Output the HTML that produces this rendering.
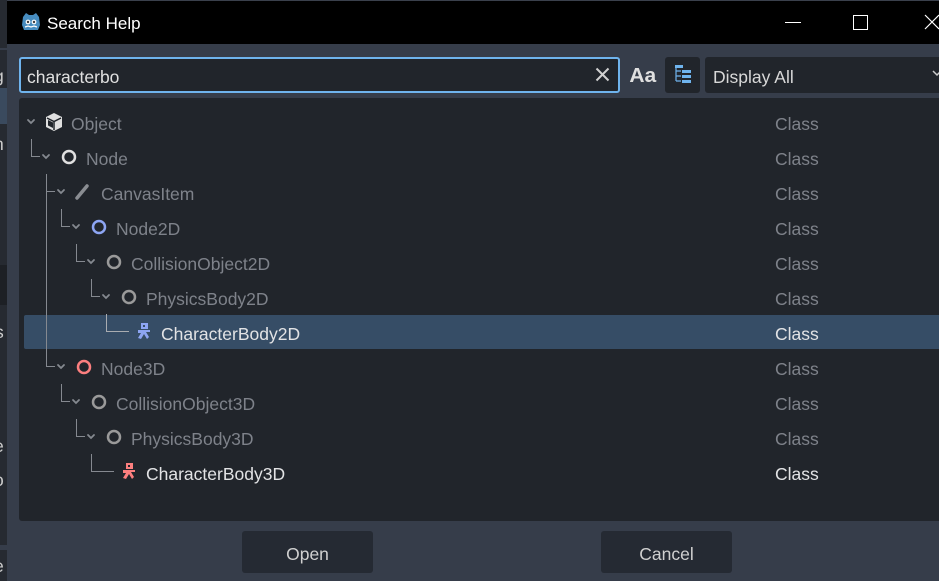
<!DOCTYPE html>
<html><head><meta charset="utf-8"><style>
*{margin:0;padding:0;box-sizing:border-box}
body{width:939px;height:581px;overflow:hidden;background:#363d4a;font-family:"Liberation Sans","DejaVu Sans",sans-serif;position:relative}
.a{position:absolute}
.t{position:absolute;font-size:17.5px;line-height:20px;white-space:nowrap;margin-top:2px}
.dim{color:#7e828a}.br{color:#e2e3e5}
</style></head><body>
<div class="a" style="left:0;top:0;width:7px;height:581px;background:#262a31"></div>
<div class="a" style="left:0;top:88px;width:7px;height:36px;background:#3a4a5e"></div>
<div class="a" style="left:0;top:48px;width:7px;height:2px;background:#363d4a"></div>
<div class="a" style="left:0;top:265px;width:7px;height:40px;background:#1d2025"></div>
<div class="a" style="left:0;top:545px;width:7px;height:5px;background:#363d4a"></div>
<div class="t" style="left:-6px;top:64px;color:#ccc">g</div>
<div class="t" style="left:-6px;top:132px;color:#ccc">n</div>
<div class="t" style="left:-5px;top:320px;color:#ccc">s</div>
<div class="t" style="left:-6px;top:434px;color:#ccc">e</div>
<div class="t" style="left:-6px;top:468px;color:#ccc">o</div>
<div class="t" style="left:-6px;top:554px;color:#ccc">e</div>
<div class="a" style="left:7px;top:0;width:932px;height:44px;background:#000"></div>
<div class="a" style="left:7px;top:0;width:932px;height:1px;background:#3a404c"></div>
<svg class="a" style="left:20px;top:11px" width="22" height="22" viewBox="0 0 22 22"><path d="M3 6 L6 2 L9 4 L13 4 L16 2 L19 6 L20 14 L18 19 L4 19 L2 14Z" fill="#478cbf"/><circle cx="8" cy="11" r="2.4" fill="#fff"/><circle cx="14" cy="11" r="2.4" fill="#fff"/><circle cx="8" cy="11" r="1.2" fill="#414042"/><circle cx="14" cy="11" r="1.2" fill="#414042"/><path d="M5 16 L8 15 L11 16 L14 15 L17 16" stroke="#fff" stroke-width="1.2" fill="none"/></svg>
<div class="t" style="left:47px;top:12px;color:#fff;font-size:17px">Search Help</div>
<div class="a" style="left:785px;top:22px;width:16px;height:1px;background:#fff"></div>
<div class="a" style="left:853px;top:15px;width:15px;height:15px;border:1px solid #fff"></div>
<svg class="a" style="left:924px;top:14px" width="15" height="16"><path d="M1 1 L15 15 M15 1 L1 15" stroke="#fff" stroke-width="1.2"/></svg>
<div class="a" style="left:19px;top:57px;width:601px;height:36px;background:#21252b;border:2px solid #6fb4ee;border-radius:3px"></div>
<div class="t br" style="left:27px;top:65px;color:#e0e0e0">characterbo</div>
<svg class="a" style="left:595px;top:67px" width="15" height="15"><path d="M1.5 1.5 L13.5 13.5 M13.5 1.5 L1.5 13.5" stroke="#d0d0d0" stroke-width="2"/></svg>
<div class="t" style="left:630px;top:64px;color:#e0e0e0;font-weight:bold;font-size:20px;letter-spacing:0px;transform:scaleX(1.05)">Aa</div>
<div class="a" style="left:665px;top:57px;width:35px;height:36px;background:#21252b;border-radius:3px"></div>
<svg class="a" style="left:673px;top:64px" width="20" height="22"><path d="M3 2 V17 M3 7 H8 M3 12 H8 M3 17 H8" stroke="#6fb4ee" stroke-width="1.2" fill="none"/><rect x="2" y="1" width="8" height="3" fill="#6fb4ee"/><rect x="9" y="6" width="9" height="3" fill="#6fb4ee"/><rect x="9" y="11" width="9" height="3" fill="#6fb4ee"/><rect x="9" y="16" width="9" height="3" fill="#6fb4ee"/></svg>
<div class="a" style="left:705px;top:57px;width:240px;height:36px;background:#21252b;border-radius:3px"></div>
<div class="t" style="left:713px;top:65px;color:#d8d8d8">Display All</div>
<svg class="a" style="left:932px;top:70px" width="10" height="8"><path d="M1 1 L5 5 L9 1" stroke="#ccc" stroke-width="1.5" fill="none"/></svg>
<div class="a" style="left:19px;top:98px;width:930px;height:423px;background:#21252b;border-radius:3px"></div>
<div class="a" style="left:24px;top:315px;width:920px;height:34px;background:#364d66;border-radius:2px"></div>
<svg class="a" style="left:0;top:0" width="939" height="581" fill="none">
<g stroke="#858990" stroke-width="1">
<path d="M31.5 139 V156.5 H40"/>
<path d="M46.5 174 V191.5 H55"/>
<path d="M46.5 192 V366.5 H55"/>
<path d="M61.5 209 V226.5 H70"/>
<path d="M76.5 244 V261.5 H85"/>
<path d="M91.5 279 V296.5 H100"/>
<path d="M106.5 314 V331.5 H129" stroke="#a9acb1"/>
<path d="M61.5 384 V401.5 H70"/>
<path d="M76.5 419 V436.5 H85"/>
<path d="M91.5 454 V471.5 H114"/>
</g>
<g stroke="#858990" stroke-width="1.8" stroke-linecap="round">
<path d="M28 120 L31 123 L34 120"/>
<path d="M43 155 L46 158 L49 155"/>
<path d="M58 190 L61 193 L64 190"/>
<path d="M73 225 L76 228 L79 225"/>
<path d="M88 260 L91 263 L94 260"/>
<path d="M103 295 L106 298 L109 295"/>
<path d="M58 365 L61 368 L64 365"/>
<path d="M73 400 L76 403 L79 400"/>
<path d="M88 435 L91 438 L94 435"/>
</g>
<path d="M54 113 L62 117 V127 L54 131 L46 127 V117Z" fill="#e0e0e0"/>
<path d="M47 118 L54 121.5 L61 118 M54 121.5 V130" stroke="#21252b" stroke-width="1.5"/>
<path d="M48 120 L53 122.5 V128 L48 125.5Z" fill="#21252b"/>
<circle cx="69" cy="157" r="6" stroke="#e0e0e0" stroke-width="2.5"/>
<path d="M77 198 L87 186" stroke="#8a8d92" stroke-width="3.5" stroke-linecap="round"/>
<circle cx="99" cy="227" r="6" stroke="#8da5f3" stroke-width="2.5"/>
<circle cx="114" cy="262" r="6" stroke="#9a9a9a" stroke-width="2.5"/>
<circle cx="129" cy="297" r="6" stroke="#9a9a9a" stroke-width="2.5"/>
<circle cx="84" cy="367" r="6" stroke="#fc7f7f" stroke-width="2.5"/>
<circle cx="99" cy="402" r="6" stroke="#9a9a9a" stroke-width="2.5"/>
<circle cx="114" cy="437" r="6" stroke="#9a9a9a" stroke-width="2.5"/>
<g fill="#8da5f3"><rect x="141" y="323" width="7" height="6"/><path d="M140 330 H150 V332 H146 L149 337 L147 339 L144 334 L141 339 L138 338 L141 333 H138 V330Z"/><rect x="143" y="325" width="2" height="2" fill="#364d66"/></g>
<g fill="#fc7f7f"><rect x="126" y="463" width="7" height="6"/><path d="M125 470 H135 V472 H131 L134 477 L132 479 L129 474 L126 479 L123 478 L126 473 H123 V470Z"/><rect x="128" y="465" width="2" height="2" fill="#21252b"/></g>
</svg>
<div class="t dim" style="left:71px;top:112px">Object</div>
<div class="t dim" style="left:86px;top:147px">Node</div>
<div class="t dim" style="left:101px;top:182px">CanvasItem</div>
<div class="t dim" style="left:116px;top:217px">Node2D</div>
<div class="t dim" style="left:131px;top:252px">CollisionObject2D</div>
<div class="t dim" style="left:146px;top:287px">PhysicsBody2D</div>
<div class="t br" style="left:161px;top:322px">CharacterBody2D</div>
<div class="t dim" style="left:101px;top:357px">Node3D</div>
<div class="t dim" style="left:116px;top:392px">CollisionObject3D</div>
<div class="t dim" style="left:131px;top:427px">PhysicsBody3D</div>
<div class="t br" style="left:146px;top:462px">CharacterBody3D</div>
<div class="t dim" style="left:775px;top:112px">Class</div>
<div class="t dim" style="left:775px;top:147px">Class</div>
<div class="t dim" style="left:775px;top:182px">Class</div>
<div class="t dim" style="left:775px;top:217px">Class</div>
<div class="t dim" style="left:775px;top:252px">Class</div>
<div class="t dim" style="left:775px;top:287px">Class</div>
<div class="t br" style="left:775px;top:322px">Class</div>
<div class="t dim" style="left:775px;top:357px">Class</div>
<div class="t dim" style="left:775px;top:392px">Class</div>
<div class="t dim" style="left:775px;top:427px">Class</div>
<div class="t br" style="left:775px;top:462px">Class</div>
<div class="a" style="left:242px;top:531px;width:131px;height:42px;background:#252a33;border-radius:3px"></div>
<div class="t" style="left:242px;top:542px;width:131px;text-align:center;color:#d0d0d0">Open</div>
<div class="a" style="left:601px;top:531px;width:131px;height:42px;background:#252a33;border-radius:3px"></div>
<div class="t" style="left:601px;top:542px;width:131px;text-align:center;color:#d0d0d0">Cancel</div>
</body></html>
